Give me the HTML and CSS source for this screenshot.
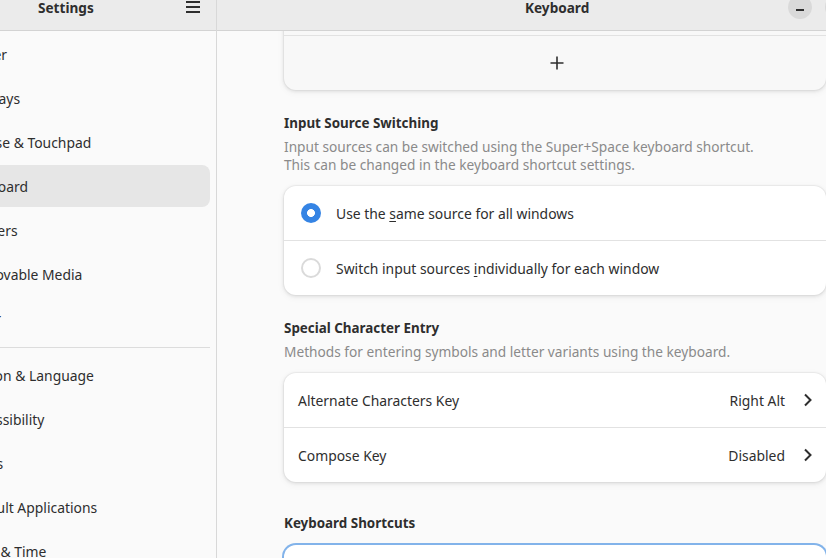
FILE: index.html
```html
<!DOCTYPE html>
<html>
<head>
<meta charset="utf-8">
<link rel="stylesheet" href="styles.css">
</head>
<body>
<div class="window">
  <aside class="sidebar">
    <header class="headerbar side-header">
      <span class="title side-title">Settings</span>
      <svg class="menu-icon" width="16" height="16" viewBox="0 0 16 16"><rect x="1" y="2" width="14" height="2" fill="#2e2e2e"/><rect x="1" y="7" width="14" height="2" fill="#2e2e2e"/><rect x="1" y="12" width="14" height="2" fill="#2e2e2e"/></svg>
    </header>
    <nav class="side-list">
      <div class="side-item">Power</div>
      <div class="side-item">Displays</div>
      <div class="side-item">Mouse &amp; Touchpad</div>
      <div class="side-item selected">Keyboard</div>
      <div class="side-item">Printers</div>
      <div class="side-item">Removable Media</div>
      <div class="side-item">Color</div>
      <div class="side-sep"></div>
      <div class="side-item">Region &amp; Language</div>
      <div class="side-item">Accessibility</div>
      <div class="side-item">Users</div>
      <div class="side-item">Default Applications</div>
      <div class="side-item">Date &amp; Time</div>
    </nav>
  </aside>
  <main class="content">
    <header class="headerbar main-header">
      <span class="title main-title">Keyboard</span>
      <div class="win-buttons">
        <span class="win-btn"><svg width="16" height="16" viewBox="0 0 16 16"><rect x="4" y="9" width="8" height="2" fill="#2e2e2e"/></svg></span>
        <span class="win-btn"></span>
      </div>
    </header>
    <div class="scroll">
      <div class="column">
        <section class="card top-card">
          <div class="row">English (US)</div>
          <div class="row add-row">
            <svg width="16" height="16" viewBox="0 0 16 16"><path d="M8 1.5V14.5M1.5 8H14.5" stroke="#2e2e2e" stroke-width="1.6"/></svg>
          </div>
        </section>

        <h3 class="group-title">Input Source Switching</h3>
        <p class="group-desc">Input sources can be switched using the Super+Space keyboard shortcut.<br>This can be changed in the keyboard shortcut settings.</p>
        <section class="card">
          <div class="row radio-row"><span class="radio checked"></span><span>Use the <u>s</u>ame source for all windows</span></div>
          <div class="row radio-row"><span class="radio"></span><span>Switch input sources <u>i</u>ndividually for each window</span></div>
        </section>

        <h3 class="group-title">Special Character Entry</h3>
        <p class="group-desc">Methods for entering symbols and letter variants using the keyboard.</p>
        <section class="card">
          <div class="row link-row"><span class="label">Alternate Characters Key</span><span class="value">Right Alt</span><svg class="chev" width="16" height="16" viewBox="0 0 16 16"><path d="M5 2.5L10.5 8L5 13.5" fill="none" stroke="#2e2e2e" stroke-width="2"/></svg></div>
          <div class="row link-row"><span class="label">Compose Key</span><span class="value">Disabled</span><svg class="chev" width="16" height="16" viewBox="0 0 16 16"><path d="M5 2.5L10.5 8L5 13.5" fill="none" stroke="#2e2e2e" stroke-width="2"/></svg></div>
        </section>

        <h3 class="group-title shortcuts-title">Keyboard Shortcuts</h3>
        <section class="card focused">
          <div class="row link-row"><span class="label">View and Customize Shortcuts</span></div>
        </section>
      </div>
    </div>
  </main>
</div>
</body>
</html>
```

FILE: styles.css
```css
* { box-sizing: border-box; }
html, body {
  margin: 0;
  padding: 0;
  width: 826px;
  height: 558px;
  overflow: hidden;
  background: #fafafa;
}
body {
  font-family: "Noto Sans", "Open Sans", sans-serif;
  font-size: 14px;
  color: #2e2e2e;
}
.window {
  display: flex;
  margin-top: -16px;
  height: 574px;
}
.headerbar {
  height: 47px;
  flex: none;
  background: #ebebeb;
  border-bottom: 1px solid #d3d3d3;
  display: flex;
  align-items: center;
}
.title {
  font-weight: 700;
  font-size: 13.6px;
  color: #2e2e2e;
}
.sidebar {
  width: 217px;
  flex: none;
  border-right: 1px solid #d8d8d8;
  display: flex;
  flex-direction: column;
  overflow: hidden;
  background: #fafafa;
}
.side-title { margin-left: 38px; }
.menu-icon { margin-left: auto; margin-right: 15px; }
.side-list {
  margin: 2px 6px 0 -43px;
  display: flex;
  flex-direction: column;
}
.side-item {
  height: 42px;
  margin-bottom: 2px;
  padding-left: 9px;
  display: flex;
  align-items: center;
  border-radius: 8px;
  white-space: nowrap;
  font-size: 13.9px;
  color: #2e2e2e;
}
.side-item.selected { background: #e6e6e6; }
.side-sep {
  height: 1px;
  background: #dcdcdc;
  margin: 6px 0 6px 0;
}
.content {
  flex: 1;
  display: flex;
  flex-direction: column;
  min-width: 0;
}
.main-title { margin-left: 308px; }
.win-buttons {
  margin-left: auto;
  margin-right: -23px;
  display: flex;
  gap: 13px;
}
.win-btn {
  width: 24px;
  height: 24px;
  border-radius: 50%;
  background: #d9d9d9;
  display: flex;
  align-items: center;
  justify-content: center;
}
.win-btn svg { margin-top: 1px; }
.scroll {
  flex: 1;
  overflow: hidden;
}
.column {
  margin-top: -51px;
  padding-left: 67px;
  display: flex;
  flex-direction: column;
}
.card {
  background: #ffffff;
  border-radius: 12px;
  box-shadow: 0 0 0 1px rgba(0,0,0,0.03), 0 1px 3px 1px rgba(0,0,0,0.07), 0 2px 6px 2px rgba(0,0,0,0.03);
  display: flex;
  flex-direction: column;
}
.top-card { background: #f8f8f8; }
.row {
  min-height: 54px;
  display: flex;
  align-items: center;
  padding: 0 10px 0 14px;
  font-size: 13.9px;
}
.row + .row { border-top: 1px solid #e2e2e2; min-height: 55px; }
.top-card .row:first-child { min-height: 55px; }
.add-row { justify-content: center; }
.group-title {
  margin: 23px 0 0 0;
  font-size: 13.4px;
  font-weight: 700;
  line-height: 20px;
  color: #2e2e2e;
}
.group-desc {
  margin: 5px 0 12px 0;
  font-size: 13.7px;
  line-height: 18px;
  color: #8a8a8a;
}
.radio-row { padding-left: 17px; gap: 15px; }
.radio {
  width: 20px;
  height: 20px;
  border-radius: 50%;
  border: 2px solid #dadada;
  flex: none;
}
.radio.checked {
  border: none;
  background: radial-gradient(circle, #ffffff 0 3.6px, #3584e4 4.3px);
}
u { text-decoration-thickness: 1px; text-underline-offset: 2px; }
.link-row .label { flex: 1; }
.value { color: #2e2e2e; margin-right: 15px; }
.chev { flex: none; }
.shortcuts-title { margin-top: 31px; margin-bottom: 12px; }
.focused { box-shadow: 0 0 0 2px #82b3ea; }
```
